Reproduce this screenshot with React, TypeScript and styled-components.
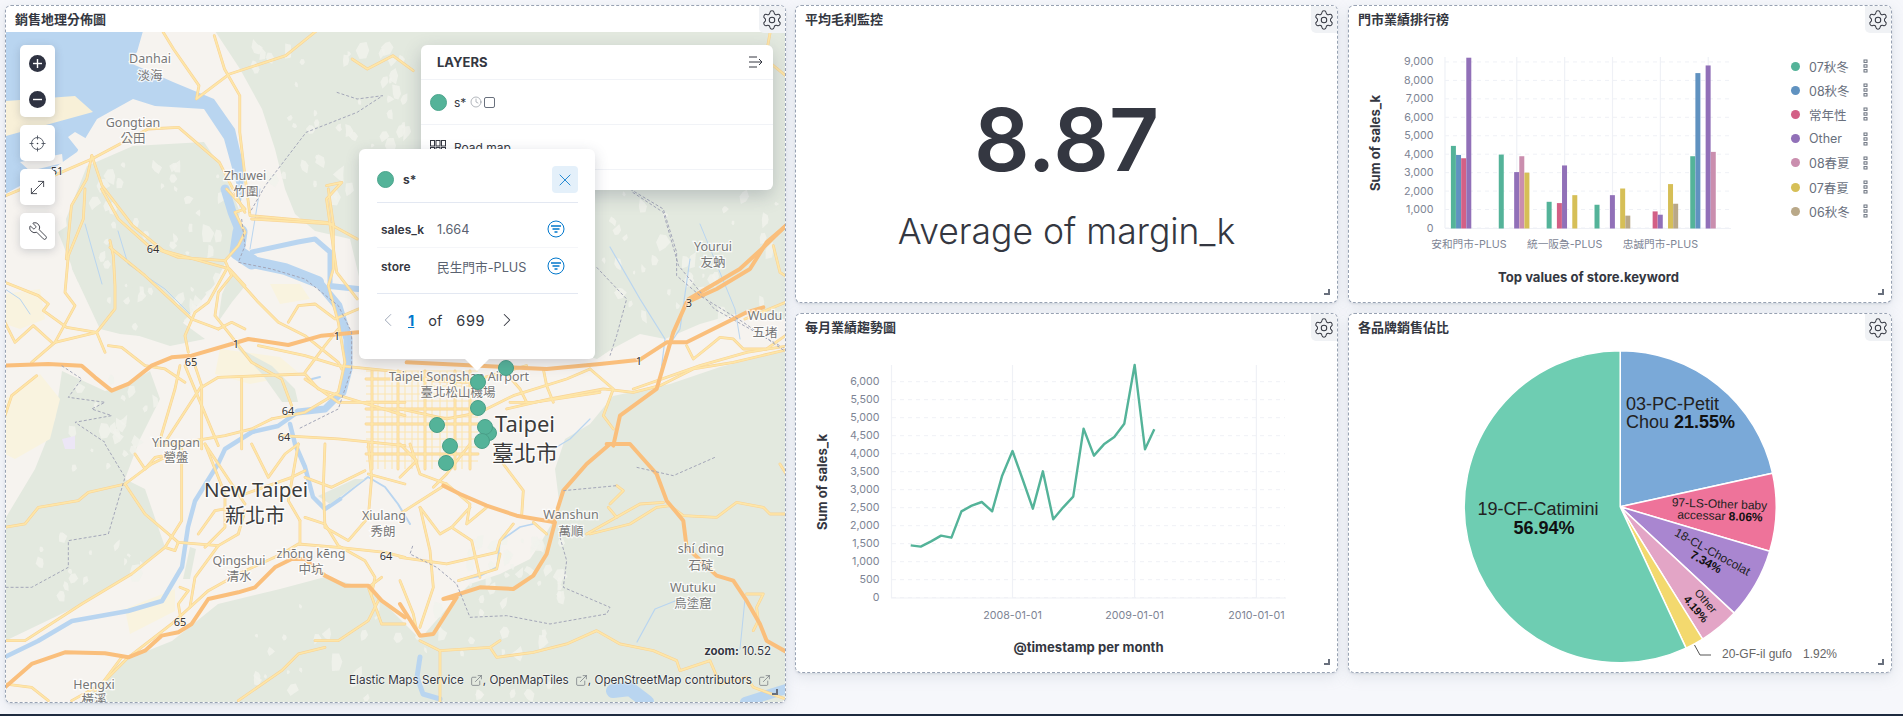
import React from "react";
import styled, { createGlobalStyle } from "styled-components";
import { Settings, Clock, ExternalLink, MoveDiagonal, Wrench, X, ChevronLeft, ChevronRight } from "lucide-react";

const Global = createGlobalStyle`
  html, body { margin: 0; padding: 0; background: #f6f7fb; overflow: hidden; }
  body { font-family: Inter, "Noto Sans CJK TC", sans-serif; color: #343741; }
`;

const Page = styled.div`
  display: flex;
  align-items: flex-start;
  gap: 9px;
  height: 714px;
  box-sizing: border-box;
  padding: 5px 0 0 5px;
`;
const BottomBar = styled.div`
  height: 2px;
  background: #1d2a3e;
`;
const Panel = styled.section<{ $w: number; $h: number }>`
  position: relative;
  box-sizing: border-box;
  width: ${(p) => p.$w}px;
  height: ${(p) => p.$h}px;
  background: #fff;
  border: 1px dashed #98a2b3;
  border-radius: 6px;
  box-shadow: 0 1px 2px rgba(152, 162, 179, 0.3), 0 4px 14px rgba(152, 162, 179, 0.22);
  display: flex;
  flex-direction: column;
  overflow: hidden;
`;
const PanelHeader = styled.header`
  height: 26px;
  flex: none;
  display: flex;
  align-items: center;
  padding: 0 9px;
  font-size: 13px;
  line-height: 26px;
  font-weight: 600;
  color: #343741;
`;
const GearButton = styled.div`
  position: absolute;
  top: 0;
  right: 0;
  width: 26px;
  height: 27px;
  z-index: 5;
  display: flex;
  align-items: center;
  justify-content: center;
  background: #f0f2f5;
  border-bottom-left-radius: 5px;
  color: #343741;
`;
const ResizeMark = styled.div`
  position: absolute;
  right: 7px;
  bottom: 7px;
  width: 6px;
  height: 6px;
  border-right: 2px solid #69707d;
  border-bottom: 2px solid #69707d;
  box-sizing: border-box;
  z-index: 6;
`;
const RightGrid = styled.div`
  display: grid;
  grid-template-columns: 543px 544px;
  grid-template-rows: 298px 360px;
  gap: 10px;
`;

/* ---- Map ---- */
const MapBody = styled.div`
  position: relative;
  flex: 1;
  overflow: hidden;
`;
const MapSvg = styled.svg`
  display: block;
  background: #f6f3ef;
`;
const Green = styled.polygon`
  fill: #e3e9df;
`;
const Sand = styled.polygon<{ $c?: string }>`
  fill: ${(p) => p.$c || "#f9f3df"};
`;
const Patch = styled.polygon`
  fill: #f1f2ec;
  opacity: 0.85;
`;
const Sea = styled.polygon`
  fill: #b9d5f0;
`;
const Stream = styled.polyline`
  fill: none;
  stroke: #b9d5f0;
  stroke-linejoin: round;
  stroke-linecap: round;
`;
const CityLine = styled.polyline`
  fill: none;
  stroke: #fbe6b2;
  stroke-width: 1.1;
`;
const RoadCase = styled.polyline`
  fill: none;
  stroke: #f8d395;
  stroke-width: 2.8;
  stroke-linejoin: round;
  stroke-linecap: round;
`;
const RoadFill = styled.polyline`
  fill: none;
  stroke: #fee6a8;
  stroke-width: 1.7;
  stroke-linejoin: round;
  stroke-linecap: round;
`;
const Motorway = styled.polyline`
  fill: none;
  stroke: #fabf7c;
  stroke-width: 4;
  stroke-linejoin: round;
  stroke-linecap: round;
`;
const Boundary = styled.polyline`
  fill: none;
  stroke: #a3a6b8;
  stroke-width: 1;
  stroke-dasharray: 3 2;
`;
const MapLabel = styled.text<{ $size: number; $dark?: boolean }>`
  font-family: "Noto Sans", "Noto Sans CJK TC", sans-serif;
  font-size: ${(p) => p.$size}px;
  fill: ${(p) => (p.$dark ? "#3c3c3c" : "#777")};
  stroke: rgba(255, 255, 255, 0.8);
  stroke-width: 2.4px;
  paint-order: stroke;
  text-anchor: middle;
  dominant-baseline: central;
`;
const Shield = styled.text`
  font-family: "Noto Sans", sans-serif;
  font-size: 11px;
  fill: #333;
  stroke: rgba(255, 255, 255, 0.6);
  stroke-width: 1.5px;
  paint-order: stroke;
  text-anchor: middle;
  dominant-baseline: central;
`;
const Marker = styled.circle`
  fill: #54b399;
  stroke: #4a9f88;
  stroke-width: 1;
`;

const Toolbar = styled.div`
  position: absolute;
  left: 14px;
  top: 13px;
  display: flex;
  flex-direction: column;
  gap: 8px;
`;
const ToolGroup = styled.div`
  width: 35px;
  background: #fff;
  border-radius: 5px;
  box-shadow: 0 2px 8px rgba(60, 70, 90, 0.22);
  display: flex;
  flex-direction: column;
`;
const ToolButton = styled.div`
  height: 36px;
  display: flex;
  align-items: center;
  justify-content: center;
  color: #343741;
`;
const MirroredWrench = styled(Wrench)`
  transform: scaleX(-1);
`;

const LayersCard = styled.div`
  position: absolute;
  left: 415px;
  top: 13px;
  width: 352px;
  height: 145px;
  background: #fff;
  border-radius: 6px;
  box-shadow: 0 6px 18px rgba(60, 70, 90, 0.25);
  display: flex;
  flex-direction: column;
`;
const LayersHead = styled.div`
  height: 35px;
  flex: none;
  box-sizing: border-box;
  display: flex;
  align-items: center;
  justify-content: space-between;
  padding: 0 9px 0 16px;
  border-bottom: 1px solid #f1f3f7;
  font-size: 13px;
  font-weight: 700;
`;
const LayerRow = styled.div`
  height: 45px;
  flex: none;
  box-sizing: border-box;
  display: flex;
  align-items: center;
  padding: 0 0 0 8px;
  border-bottom: 1px solid #f1f3f7;
  font-size: 12px;
  color: #343741;
`;
const LayerSlot = styled.span`
  width: 18px;
  margin-right: 7px;
  display: flex;
  justify-content: center;
`;
const SmallSquare = styled.span`
  display: inline-block;
  width: 9px;
  height: 9px;
  border: 1px solid #69707d;
  border-radius: 2px;
  margin-left: 2px;
`;
const Dot = styled.span`
  display: inline-block;
  width: 17px;
  height: 17px;
  border-radius: 50%;
  background: #54b399;
  box-sizing: border-box;
  border: 1px solid #4da68e;
  flex: none;
`;

const Popover = styled.div`
  position: absolute;
  left: 353px;
  top: 117px;
  width: 236px;
  height: 210px;
  box-sizing: border-box;
  background: #fff;
  border-radius: 6px;
  box-shadow: 0 4px 14px rgba(60, 70, 90, 0.22);
  padding: 17px 17px 0 18px;
  display: flex;
  flex-direction: column;
  &::after {
    content: "";
    position: absolute;
    left: 106px;
    bottom: -12px;
    border-left: 12px solid transparent;
    border-right: 12px solid transparent;
    border-top: 12px solid #fff;
  }
`;
const PopHead = styled.div`
  display: flex;
  align-items: center;
  height: 27px;
  margin-bottom: 9px;
  font-size: 12px;
  font-weight: 700;
  gap: 9px;
`;
const CloseButton = styled.div`
  margin-left: auto;
  width: 26px;
  height: 27px;
  border-radius: 4px;
  background: #e4f0fa;
  color: #0077cc;
  display: flex;
  align-items: center;
  justify-content: center;
`;
const PopRows = styled.div`
  border-top: 1px solid #e3e8f2;
  border-bottom: 1px solid #e3e8f2;
  padding: 8px 0 9px;
`;
const PopRow = styled.div<{ $last?: boolean }>`
  height: 36px;
  display: grid;
  grid-template-columns: 56px 1fr 18px 13px;
  align-items: center;
  padding-left: 4px;
  font-size: 12px;
  border-bottom: ${(p) => (p.$last ? "0" : "1px solid #f5f6f9")};
`;
const PopKey = styled.span`
  font-weight: 600;
  color: #343741;
`;
const PopVal = styled.span`
  color: #5a6270;
  font-size: 12.7px;
  white-space: nowrap;
`;
const Pager = styled.div`
  height: 52px;
  display: flex;
  align-items: center;
  font-size: 14.5px;
  color: #343741;
`;
const PagerNow = styled.span`
  color: #0077cc;
  font-weight: 700;
  text-decoration: underline;
  margin: 0 14px 0 9px;
`;
const PagerTotal = styled.span`
  margin: 0 11px 0 14px;
  letter-spacing: 0.6px;
`;
const MapStatus = styled.div`
  position: absolute;
  right: 14px;
  bottom: 44px;
  font-size: 11.5px;
  color: #343741;
  text-shadow: 0 0 2px #fff, 0 0 2px #fff;
  & b { font-weight: 700; }
`;
const Attribution = styled.div`
  position: absolute;
  right: 14px;
  bottom: 15px;
  font-size: 11.7px;
  color: #343741;
  white-space: nowrap;
  display: flex;
  align-items: center;
  text-shadow: 0 0 2px #fff, 0 0 2px #fff;
  & svg { margin: 0 0 0 6px; color: #4a505c; }
`;

/* ---- Metric ---- */
const MetricBody = styled.div`
  flex: 1;
  display: flex;
  flex-direction: column;
  align-items: center;
  padding-top: 63px;
`;
const MetricValue = styled.div`
  font-size: 87px;
  line-height: 89px;
  font-weight: 600;
  color: #343741;
`;
const MetricLabel = styled.div`
  margin-top: 27px;
  font-size: 35.5px;
  line-height: 42px;
  font-weight: 300;
  color: #343741;
`;

/* ---- Charts ---- */
const ChartRow = styled.div`
  flex: 1;
  display: flex;
`;
const ChartSvg = styled.svg`
  display: block;
  flex: none;
`;
const GridLine = styled.line<{ $dash?: boolean }>`
  stroke: #eff1f6;
  stroke-width: ${(p) => (p.$dash ? 1 : 1.2)};
  stroke-dasharray: ${(p) => (p.$dash ? "4 4" : "none")};
`;
const Tick = styled.text<{ $anchor?: string }>`
  font-family: Inter, "Noto Sans CJK TC", sans-serif;
  font-size: 10.7px;
  fill: #7d8494;
  text-anchor: ${(p) => p.$anchor || "end"};
  dominant-baseline: central;
`;
const AxisTitle = styled.text`
  font-family: Inter, sans-serif;
  font-size: 13.1px;
  font-weight: 700;
  fill: #343741;
  text-anchor: middle;
  dominant-baseline: central;
`;
const Legend = styled.ul`
  list-style: none;
  margin: 0;
  padding: 22px 0 0 22px;
  display: flex;
  flex-direction: column;
`;
const LegendItem = styled.li`
  height: 24.2px;
  display: flex;
  align-items: center;
  font-size: 12.5px;
  color: #69707d;
  white-space: nowrap;
`;
const LegendDot = styled.span<{ $c: string }>`
  width: 9px;
  height: 9px;
  border-radius: 50%;
  background: ${(p) => p.$c};
  margin-right: 9px;
  flex: none;
`;
const LegendText = styled.span`
  width: 54px;
`;
const PieText = styled.text<{ $size: number; $anchor?: string; $gray?: boolean }>`
  font-family: "Liberation Sans", Arial, sans-serif;
  font-size: ${(p) => p.$size}px;
  fill: ${(p) => (p.$gray ? "#666" : "#222")};
  text-anchor: ${(p) => p.$anchor || "middle"};
  dominant-baseline: central;
  & tspan { font-weight: 700; fill: #111; }
`;

/* ---- Small drawn icons ---- */
const Circled = ({ minus }: { minus?: boolean }) => (
  <svg width="17" height="17" viewBox="0 0 17 17">
    <circle cx="8.5" cy="8.5" r="8.5" fill="#2f3342" />
    <rect x="4" y="7.8" width="9" height="1.4" fill="#fff" />
    {!minus && <rect x="7.8" y="4" width="1.4" height="9" fill="#fff" />}
  </svg>
);
const Locate = () => (
  <svg width="17" height="17" viewBox="0 0 17 17" fill="none" stroke="#4a505c" strokeWidth=".9">
    <circle cx="8.5" cy="8.5" r="6" />
    <path d="M8.5 0.5v4M8.5 12.5v4M.5 8.5h4M12.5 8.5h4" />
    <circle cx="8.5" cy="8.5" r=".8" fill="#343741" stroke="none" />
  </svg>
);
const FilterCircle = () => (
  <svg width="18" height="18" viewBox="0 0 18 18" fill="none" stroke="#0077cc">
    <circle cx="9" cy="9" r="8" strokeWidth="1" />
    <path d="M4 6h10M5.5 9h7M7.5 12h3" strokeWidth="1.3" />
  </svg>
);
const CollapseLayers = () => (
  <svg width="16" height="16" viewBox="0 0 16 16" fill="none" stroke="#343741" strokeWidth="1">
    <path d="M1 3h8M1 8h13M1 13h8M11 5l3 3-3 3" />
  </svg>
);
const RoadGrid = () => (
  <svg width="16" height="14" viewBox="0 0 16 14" fill="none" stroke="#343741" strokeWidth="1">
    {[0.5, 6, 11.5].map((x) =>
      [0.5, 7.5].map((y) => <rect key={`${x}-${y}`} x={x} y={y} width="4" height="5.5" />)
    )}
  </svg>
);
const Kebab = () => (
  <svg width="5" height="14" viewBox="0 0 5 14" fill="none" stroke="#69707d" strokeWidth="1">
    <rect x="1" y="1" width="3" height="2.4" />
    <rect x="1" y="5.8" width="3" height="2.4" />
    <rect x="1" y="10.6" width="3" height="2.4" />
  </svg>
);

/* ---- Map data (page coordinates, or traced tile coordinates) ---- */
const greens = [
  "87,167 133,147 204,143 224,173 240,213 232,250 215,285 190,315 170,340 120,335 100,330 72,270 66,220",
  "215,32 240,70 262,110 275,150 285,190 295,215 315,232 350,240 362,290 400,300 597,360 612,350 640,335 665,340 700,325 735,315 786,320 786,32",
  "786,352 720,368 670,385 613,397 590,425 565,440 555,470 560,510 540,545 530,560 500,575 470,585 455,600 420,640 370,590 325,578 280,590 218,605 172,642 122,662 82,703 786,703",
  "62,372 105,392 122,388 150,372 160,400 140,440 125,480 145,490 165,548 132,575 82,605 5,642 5,520 35,470 55,420",
  "58,233 85,215 105,283 78,283",
  "118,280 150,300 205,340 170,347 118,330",
];
const sandy: [string, string?][] = [
  ["5,295 40,290 45,320 20,330 5,325"],
  ["5,400 40,375 60,400 50,440 15,460 5,455"],
  ["125,610 175,590 175,612 130,635"],
  ["220,350 280,358 300,375 250,385 215,375"],
  ["270,285 300,285 310,300 280,305"],
  ["62,440 75,437 75,450 65,450", "#ece6f6"],
];
const seaPoly =
  "5,32 143,32 137,53 128,63 173,83 214,100 235,130 245,173 240,210 237,187 224,140 204,110 155,107 133,100 97,120 77,153 57,167 5,195";
const harbour = [
  "6,102 75,97 93,113 6,137",
  "20,163 62,155 63,164 30,172",
  "80,153 68,138 75,133 87,140 100,123 110,128 95,150",
];
const rivers: [string, number][] = [
  ["225,190 232,213 240,233", 9],
  ["240,233 237,253 252,263", 15],
  ["252,263 285,270 318,283", 12],
  ["318,283 338,307 348,340 348,370 342,393", 9],
  ["342,393 325,410 298,413", 7],
  ["298,413 278,427 252,433 225,450 218,465 195,502 188,528 182,568 162,602 128,612 72,622 38,642 5,658", 4.5],
  ["252,253 298,243 315,240 330,253 330,283", 5],
  ["330,287 358,290", 6],
  ["290,425 295,445 305,468 313,498 325,510 340,500", 4.5],
  ["340,500 355,488 368,478 385,488 398,505 410,525", 2],
  ["458,582 480,577 497,568 500,542 520,528 533,525", 1.6],
  ["420,658 417,678 423,695 440,700", 5],
  ["613,692 630,690 647,703", 14],
  ["745,703 770,695 786,690", 10],
  ["545,455 570,440 590,420", 1.2],
  ["85,225 92,250 102,285", 1],
  ["118,232 128,265 165,290 190,315", 1],
  ["610,248 640,300 665,340 660,380", 1.2],
  ["690,260 680,330 670,345", 1.2],
  ["700,225 735,310 740,340", 1],
  ["637,643 655,610 680,600", 1.2],
  ["745,600 740,650", 1],
  ["5,290 20,300 30,315", 1],
  ["260,190 250,250", 1],
  ["312,380 320,378", 2],
];
const greenRiver = [
  "232,273 245,287 232,303 218,323 222,295",
  "235,347 272,367 295,390 298,403 282,403 262,375",
  "190,548 196,550 190,580 183,580",
  "318,497 355,480 365,480 330,505",
];

/* light clearings scattered over the hills, from a fixed seed */
const patchAreas = [
  [95, 165, 225, 330, 46],
  [250, 40, 410, 205, 52],
  [600, 195, 780, 320, 34],
  [250, 600, 560, 700, 40],
  [470, 540, 565, 615, 34],
  [60, 380, 160, 470, 20],
  [30, 530, 150, 600, 14],
];
const makePatches = () => {
  let seed = 17;
  const rnd = () => {
    seed = (seed * 16807) % 2147483647;
    return seed / 2147483647;
  };
  const out: string[] = [];
  patchAreas.forEach(([x0, y0, x1, y1, n]) => {
    for (let i = 0; i < n; i++) {
      const cx = x0 + rnd() * (x1 - x0);
      const cy = y0 + rnd() * (y1 - y0);
      const pts: string[] = [];
      const count = 6;
      const base = 1.5 + rnd() * 4;
      for (let k = 0; k < count; k++) {
        const a = (k / count) * Math.PI * 2;
        const r = base * (0.5 + rnd());
        pts.push(`${(cx + r * Math.cos(a)).toFixed(1)},${(cy + r * 1.4 * Math.sin(a)).toFixed(1)}`);
      }
      out.push(pts.join(" "));
    }
  });
  return out;
};
const PATCHES = makePatches();

type Tile = { tf: string; minor: string[]; motor?: string[]; bound?: string[] };
const TILES: Tile[] = [
  {
    tf: "scale(.5102 .3333)",
    minor: [
      "320,100 340,150 390,260 385,300 450,225 560,170 620,96",
      "420,110 440,210 470,290 470,400 480,530 490,650 640,670 700,720",
      "690,180 720,210 770,170 810,215",
      "11,590 105,530 180,480 290,390 350,385 430,490 480,640",
      "180,470 200,560 260,680 320,755 450,810 480,860",
      "180,470 170,540 140,620 130,780",
      "640,560 670,550 640,600 660,820 700,900",
      "1510,96 1500,180 1540,230",
      "1460,960 1540,910",
    ],
    motor: ["1540,680 1500,740 1450,810 1350,900"],
    bound: ["660,280 700,300 750,290 700,340 600,400 520,560 490,640", "1240,580 1300,640 1330,800 1400,930 1540,1050"],
  },
  {
    tf: "translate(5 190) scale(.3333)",
    minor: [
      "290,0 340,90 430,170 520,205 660,215 680,260 640,310 630,380 670,430 740,520 830,570 860,650",
      "740,90 985,105 985,240 970,290 1000,400 1020,520 1000,610 900,670 800,690",
      "315,155 325,200 330,290 330,360 275,430 300,490",
      "315,175 420,260 560,390 600,405 640,420",
      "240,0 235,90 190,200 180,310 210,350 150,460 80,520",
      "0,280 100,320 130,345 115,365 185,415 275,430 150,460",
      "0,400 30,460 85,410 140,460",
      "310,470 350,475 420,530 480,540 540,580",
      "550,490 540,440 570,370 610,340 665,240",
      "560,500 590,590 590,780",
      "590,595 640,565 900,555 940,600 1200,680",
      "710,570 710,780",
      "590,590 480,760",
      "525,530 510,600 460,770",
      "540,530 640,770",
      "680,250 760,340 820,400 900,440 1000,520 1010,540",
      "850,400 880,350 930,345 990,390 1060,360",
      "760,470 900,500 1000,530 1200,550",
      "900,550 960,470 1000,420",
      "800,690 740,720 660,740 480,770",
      "830,740 1000,750 1200,770",
      "0,680 20,620 95,560",
      "660,215 700,170 720,130 690,70 720,60 665,0",
      "970,0 985,105",
      "640,420 680,400 720,420",
      "900,570 1000,640 1200,640",
    ],
    motor: ["0,530 130,525 230,530 270,565 320,605 370,585 440,530 500,505 560,500 690,462 730,450 850,468 950,440 1060,430"],
    bound: [
      "170,530 230,570 190,625 300,640 260,660 320,680 210,700 300,760",
      "710,90 720,170 700,220 800,240 900,270 1000,350 1040,430 1040,540 1000,660 880,720",
    ],
  },
  {
    tf: "translate(400 190) scale(.3333)",
    minor: [
      "430,540 440,590 460,640",
      "0,660 140,690 240,670 340,620 500,570 570,540",
      "600,610 400,640 330,640",
      "320,660 450,630 610,600 700,610 780,590 880,540 1000,520 1170,480",
      "570,540 640,600 610,680 640,720",
      "700,600 900,530 1040,490 1170,470",
      "860,470 880,510 930,470 960,445 1000,450 1030,480 1100,480 1170,430",
      "1120,170 1140,250 1170,270",
      "0,570 200,580 380,530",
      "300,530 360,600 380,640",
    ],
    motor: [
      "20,520 440,540 600,525 720,512 800,460 860,460 1000,390 1040,370 1090,355",
      "640,770 660,680 770,600 820,430 860,340 950,300 1050,240 1100,160 1170,100",
    ],
    bound: [
      "690,0 790,60 830,190 830,260 900,320 1030,400 1160,490",
      "590,235 680,330 650,440 630,500",
    ],
  },
  {
    tf: "translate(5 445) scale(.3333)",
    minor: [
      "0,250 60,240 100,190 220,170 250,145 360,120 440,60 500,30",
      "360,120 420,210 520,295 640,305 700,270 720,200",
      "480,310 510,320 520,295",
      "640,305 570,400 555,490 500,540 370,640 270,740",
      "600,310 660,250 660,150 600,0",
      "580,270 630,200 660,195",
      "525,430 550,440 520,480 530,540",
      "555,490 610,440 700,390 830,330 880,300 1000,310 1140,325 1200,340",
      "885,230 885,300",
      "880,0 850,170 885,230",
      "900,220 960,240 1000,305 1080,350 1110,400 1100,450",
      "960,0 955,130 960,250 1030,290 1090,220 1100,100 1090,0",
      "720,180 600,0",
      "720,150 860,100 900,80",
      "1080,80 980,130 900,100",
      "0,590 60,590 230,480 380,390 480,310 530,230 530,0",
      "0,720 80,730 130,770",
      "200,770 290,720 350,640",
      "930,590 1000,590 1090,530 1120,470",
      "700,770 830,680 880,630 960,610",
      "1200,540 1130,540 1090,430 1130,400",
      "390,30 420,75 450,40 500,30",
      "740,0 790,100 840,30 880,0",
      "1200,120 1090,90",
    ],
    motor: ["0,730 80,660 180,625 300,628 370,640 420,620 470,575 520,565 560,540 610,465 700,445 750,430 810,370 860,345 900,345 960,395 1020,425 1090,425 1130,470 1200,520"],
    bound: ["300,0 360,100 310,270 190,290 190,370 80,430 0,430"],
  },
  {
    tf: "translate(400 445) scale(.3333)",
    minor: [
      "30,0 60,90 140,120 210,180 200,240 260,190",
      "310,60 370,140 365,215",
      "0,340 140,360 290,325 300,290 340,240",
      "210,190 155,250 120,270 60,190",
      "155,250 215,290 240,400",
      "175,410 290,375 300,330",
      "140,120 30,190 0,210",
      "60,190 90,320 100,430 60,550",
      "0,410 40,510 50,560",
      "570,270 690,240 770,190 810,185 850,215 950,220 1010,175 1090,190 1110,210 1170,210",
      "560,270 640,225 720,180 790,175",
      "630,180 670,140 650,125",
      "625,190 650,220",
      "60,590 120,620 270,610 300,590 270,610 290,640 400,625 500,600 590,560 660,600 760,620 830,650 840,680 930,650 960,720 1040,700 1060,730 1170,770",
      "120,620 120,780",
      "1040,450 1090,450 1070,490 1075,530 1060,560",
      "440,270 400,235",
      "0,0 50,50 0,100",
      "210,0 140,90 100,130",
      "1140,60 1165,100",
    ],
    motor: [
      "0,480 60,575 100,570 170,460 130,465 240,430 340,435 400,395 440,330 465,235 350,215 260,185 180,150 130,125",
      "460,235 490,140 560,60 630,0",
      "620,0 690,0 770,90 800,170 850,230 860,310 950,395 1000,410 1040,470 1080,540 1100,590 1170,630",
    ],
    bound: [
      "480,280 500,350 490,430 630,490 620,510 450,540 320,515 210,520 170,420 110,370 30,330 40,300",
      "490,140 650,125",
      "710,70 820,95 945,40",
    ],
  },
];
const gridV = [372, 398, 425, 455, 470];
const gridH = [380, 410, 425, 455];
const cityV = [378, 385, 392, 405, 412, 418, 432, 440, 447, 462];
const cityH = [372, 387, 395, 402, 418, 433, 440, 448, 462];
const labels: [number, number, string, number, boolean?][] = [
  [150, 59, "Danhai", 12.5], [150, 76, "淡海", 12.5],
  [133, 123, "Gongtian", 12.5], [133, 139, "公田", 12.5],
  [245, 176, "Zhuwei", 12.5], [246, 192, "竹圍", 12.5],
  [713, 247, "Yourui", 12.5], [713, 263, "友蚋", 12.5],
  [765, 316, "Wudu", 12.5], [765, 333, "五堵", 12.5],
  [459, 377, "Taipei Songshan Airport", 12.5], [458, 393, "臺北松山機場", 12.5],
  [525, 424, "Taipei", 22, true], [525, 453, "臺北市", 22, true],
  [256, 490, "New Taipei", 20.5, true], [255, 516, "新北市", 20, true],
  [176, 443, "Yingpan", 12.5], [176, 458, "營盤", 12.5],
  [384, 516, "Xiulang", 12.5], [383, 532, "秀朗", 12.5],
  [571, 515, "Wanshun", 12.5], [571, 532, "萬順", 12.5],
  [701, 549, "shí dìng", 12.5], [701, 566, "石碇", 12.5],
  [693, 588, "Wutuku", 12.5], [693, 604, "烏塗窟", 12.5],
  [239, 561, "Qingshui", 12.5], [239, 577, "清水", 12.5],
  [311, 554, "zhōng kēng", 12.5], [311, 570, "中坑", 12.5],
  [94, 685, "Hengxi", 12.5], [94, 700, "橫溪", 12.5],
];
const shields: [number, number, string][] = [
  [57, 171, "51"], [153, 249, "64"], [191, 362, "65"], [236, 344, "1"], [337, 336, "1"],
  [639, 361, "1"], [689, 303, "3"], [288, 411, "64"], [284, 437, "64"], [386, 556, "64"], [180, 622, "65"],
];
const markers = [
  [506, 369], [478, 383], [478, 409], [437, 426], [489, 434], [485, 428], [482, 442], [450, 447], [446, 464],
];

const MapDrawing = () => (
  <MapSvg width="779" height="670" viewBox="6 33 779 670">
    {greens.map((p, i) => <Green key={i} points={p} />)}
    {PATCHES.map((p, i) => <Patch key={i} points={p} />)}
    {sandy.map(([p, c], i) => <Sand key={i} points={p} $c={c} />)}
    <Sea points={seaPoly} />
    {harbour.map((p, i) => <Sand key={i} points={p} $c={i === 0 ? "#f8f0d8" : "#f6f3ef"} />)}
    {rivers.map(([p, w], i) => <Stream key={i} points={p} strokeWidth={w} />)}
    {greenRiver.map((p, i) => <Green key={i} points={p} />)}
    {cityV.map((x) => <CityLine key={x} points={`${x},372 ${x},470`} />)}
    {cityH.map((y) => <CityLine key={y} points={`366,${y} 478,${y}`} />)}
    {gridV.map((x) => <RoadCase key={x} points={`${x},372 ${x},470`} />)}
    {gridH.map((y) => <RoadCase key={y} points={`366,${y} 478,${y}`} />)}
    {TILES.map((t, i) => (
      <g key={i} transform={t.tf}>
        {t.minor.map((p, j) => <RoadCase key={j} points={p} vectorEffect="non-scaling-stroke" />)}
      </g>
    ))}
    {gridV.map((x) => <RoadFill key={x} points={`${x},372 ${x},470`} />)}
    {gridH.map((y) => <RoadFill key={y} points={`366,${y} 478,${y}`} />)}
    {TILES.map((t, i) => (
      <g key={i} transform={t.tf}>
        {t.minor.map((p, j) => <RoadFill key={j} points={p} vectorEffect="non-scaling-stroke" />)}
        {(t.motor || []).map((p, j) => <Motorway key={j} points={p} vectorEffect="non-scaling-stroke" />)}
        {(t.bound || []).map((p, j) => <Boundary key={j} points={p} vectorEffect="non-scaling-stroke" />)}
      </g>
    ))}
    {labels.map(([x, y, t, s, d], i) => <MapLabel key={i} x={x} y={y} $size={s} $dark={d}>{t}</MapLabel>)}
    {shields.map(([x, y, t], i) => <Shield key={i} x={x} y={y}>{t}</Shield>)}
    {markers.map(([x, y], i) => <Marker key={i} cx={x} cy={y} r="7.5" />)}
  </MapSvg>
);

/* ---- Bar chart ---- */
const COLORS: Record<string, string> = {
  g: "#54b399", b: "#6092c0", p: "#d36086", u: "#9170b8", l: "#ca8eae", y: "#d6bf57", t: "#b9a888",
};
const LEGEND: [string, string][] = [
  ["07秋冬", "g"], ["08秋冬", "b"], ["常年性", "p"], ["Other", "u"], ["08春夏", "l"], ["07春夏", "y"], ["06秋冬", "t"],
];
const SLOT = ["g", "b", "p", "u", "l", "y", "t"];
const BARS: Record<string, number>[] = [
  { g: 4450, b: 3960, p: 3780, u: 9230 },
  { g: 3980, u: 3030, l: 3890, y: 3000 },
  { g: 1420, p: 1350, u: 3390, y: 1780 },
  { g: 1260, u: 1780, y: 2140, t: 670 },
  { p: 900, u: 720, y: 2380, t: 1315 },
  { g: 3890, b: 8396, u: 8810, l: 4126 },
];
const groupX = (i: number) => 1468.9 + 47.87 * i;
const valY = (v: number) => 228 - (v * 18.45) / 1000;

const BarChart = () => (
  <ChartSvg width="420" height="271" viewBox="1349 32 420 271">
    {Array.from({ length: 10 }, (_, i) => (
      <GridLine key={i} $dash x1="1445" x2="1731" y1={valY(i * 1000)} y2={valY(i * 1000)} />
    ))}
    {[0, 1, 2, 3, 4, 5].map((i) => (
      <GridLine key={i} x1={i === 0 ? 1445 : groupX(i)} x2={i === 0 ? 1445 : groupX(i)} y1="57" y2="228" />
    ))}
    <GridLine x1="1445" x2="1731" y1="228.5" y2="228.5" />
    {BARS.map((g, i) =>
      SLOT.map((k, s) =>
        g[k] ? (
          <rect
            key={k}
            x={groupX(i) - 18 + 5.13 * s}
            y={valY(g[k])}
            width="5"
            height={228.5 - valY(g[k])}
            fill={COLORS[k]}
          />
        ) : null
      )
    )}
    {Array.from({ length: 10 }, (_, i) => (
      <Tick key={i} x="1433.5" y={valY(i * 1000)}>{i === 0 ? "0" : `${i},000`}</Tick>
    ))}
    <Tick $anchor="middle" x={groupX(0)} y="244">安和門市-PLUS</Tick>
    <Tick $anchor="middle" x={groupX(2)} y="244">統一阪急-PLUS</Tick>
    <Tick $anchor="middle" x={groupX(4)} y="244">忠誠門市-PLUS</Tick>
    <AxisTitle transform="translate(1375 143) rotate(-90)">Sum of sales_k</AxisTitle>
    <AxisTitle x="1588.5" y="277">Top values of store.keyword</AxisTitle>
  </ChartSvg>
);

/* ---- Line chart ---- */
const LINE = [
  [338, 706], [366, 710], [395, 694], [423, 677], [452, 683], [480, 604], [509, 587], [537, 576], [566, 604],
  [594, 497], [623, 423], [652, 510], [680, 596], [708, 484], [737, 628], [765, 592], [793, 560], [822, 356],
  [851, 437], [879, 403], [908, 381], [936, 341], [965, 165], [994, 418], [1020, 358],
];
const lineY = (v: number) => 597.7 - (v * 18) / 500;
const LineChart = () => (
  <ChartSvg width="541" height="332" viewBox="796 340 541 332">
    {Array.from({ length: 13 }, (_, i) => (
      <GridLine key={i} $dash x1="892" x2="1285" y1={lineY(i * 500)} y2={lineY(i * 500)} />
    ))}
    {[891.5, 1012.5, 1134.6, 1256.4].map((x) => <GridLine key={x} x1={x} x2={x} y1="365" y2="598" />)}
    <GridLine x1="891" x2="1286" y1="598" y2="598" />
    <polyline
      fill="none"
      stroke="#54b399"
      strokeWidth="2.4"
      strokeLinejoin="round"
      points={LINE.map(([x, y]) => `${790 + x / 2.8},${310 + y / 3}`).join(" ")}
    />
    {Array.from({ length: 13 }, (_, i) => (
      <Tick key={i} x="879.5" y={lineY(i * 500)}>{i === 0 ? "0" : (i * 500).toLocaleString("en-US")}</Tick>
    ))}
    <Tick $anchor="middle" x="1012.5" y="615">2008-01-01</Tick>
    <Tick $anchor="middle" x="1134.6" y="615">2009-01-01</Tick>
    <Tick $anchor="middle" x="1256.4" y="615">2010-01-01</Tick>
    <AxisTitle transform="translate(821.5 482) rotate(-90)">Sum of sales_k</AxisTitle>
    <AxisTitle x="1088.5" y="646.5">@timestamp per month</AxisTitle>
  </ChartSvg>
);

/* ---- Pie chart ---- */
const SLICES: [number, string][] = [
  [21.55, "#7aa9d8"], [8.06, "#ee739a"], [7.34, "#a986d0"], [4.19, "#e3a5c6"], [1.92, "#f3d96e"], [56.94, "#6ecdb2"],
];
const PX = 1621.2, PY = 506.7, PR = 156;
const polar = (pct: number): [number, number] => {
  const a = (pct / 100) * 2 * Math.PI;
  return [PX + PR * Math.sin(a), PY - PR * Math.cos(a)];
};
const PieChart = () => {
  let acc = 0;
  return (
    <ChartSvg width="542" height="332" viewBox="1350 340 542 332">
      {SLICES.map(([v, c]) => {
        const [x1, y1] = polar(acc);
        acc += v;
        const [x2, y2] = polar(acc);
        return (
          <path
            key={c}
            d={`M${PX} ${PY}L${x1} ${y1}A${PR} ${PR} 0 ${v > 50 ? 1 : 0} 1 ${x2} ${y2}Z`}
            fill={c}
            stroke="#fff"
            strokeWidth="1.5"
          />
        );
      })}
      <PieText $size={18} $anchor="start" x="1627" y="404">03-PC-Petit</PieText>
      <PieText $size={18} $anchor="start" x="1627" y="422">Chou <tspan>21.55%</tspan></PieText>
      <PieText $size={18} x="1539" y="509">19-CF-Catimini</PieText>
      <PieText $size={18} x="1545" y="528"><tspan>56.94%</tspan></PieText>
      <PieText $size={12} x="1720.5" y="504" transform="rotate(2 1720.5 504)">97-LS-Other baby</PieText>
      <PieText $size={12} x="1721" y="516" transform="rotate(2 1721 516)">accessar <tspan>8.06%</tspan></PieText>
      <PieText $size={12} x="1713.5" y="552" transform="rotate(29 1713.5 552)">18-CL-Chocolat</PieText>
      <PieText $size={12} x="1707" y="562" transform="rotate(29 1707 562)"><tspan>7.34%</tspan></PieText>
      <PieText $size={11} x="1707" y="601" transform="rotate(50 1707 601)">Other</PieText>
      <PieText $size={11} x="1697" y="609" transform="rotate(50 1697 609)"><tspan>4.19%</tspan></PieText>
      <polyline points="1695.5,645 1701,655 1712,655" fill="none" stroke="#555" strokeWidth="1" />
      <PieText $gray $size={12} $anchor="start" x="1723" y="654">20-GF-il gufo</PieText>
      <PieText $gray $size={12} $anchor="start" x="1804" y="654">1.92%</PieText>
    </ChartSvg>
  );
};

const Gear = () => (
  <GearButton>
    <Settings size={22} strokeWidth={1.1} />
  </GearButton>
);

export default function App() {
  return (
    <>
      <Global />
      <Page>
        <Panel $w={781} $h={698}>
          <PanelHeader>銷售地理分佈圖</PanelHeader>
          <MapBody>
            <MapDrawing />
            <Toolbar>
              <ToolGroup>
                <ToolButton><Circled /></ToolButton>
                <ToolButton><Circled minus /></ToolButton>
              </ToolGroup>
              <ToolGroup><ToolButton><Locate /></ToolButton></ToolGroup>
              <ToolGroup><ToolButton><MoveDiagonal size={21} strokeWidth={1} /></ToolButton></ToolGroup>
              <ToolGroup><ToolButton><MirroredWrench size={20} strokeWidth={1.1} /></ToolButton></ToolGroup>
            </Toolbar>
            <LayersCard>
              <LayersHead>LAYERS<CollapseLayers /></LayersHead>
              <LayerRow>
                <LayerSlot><Dot /></LayerSlot>
                s*&nbsp;<Clock size={12} strokeWidth={1} color="#69707d" /><SmallSquare />
              </LayerRow>
              <LayerRow>
                <LayerSlot><RoadGrid /></LayerSlot>
                Road map
              </LayerRow>
            </LayersCard>
            <Popover>
              <PopHead>
                <Dot />s*
                <CloseButton><X size={20} strokeWidth={1} /></CloseButton>
              </PopHead>
              <PopRows>
                <PopRow>
                  <PopKey>sales_k</PopKey>
                  <PopVal>1.664</PopVal>
                  <FilterCircle />
                </PopRow>
                <PopRow $last>
                  <PopKey>store</PopKey>
                  <PopVal>民生門市-PLUS</PopVal>
                  <FilterCircle />
                </PopRow>
              </PopRows>
              <Pager>
                <ChevronLeft size={22} strokeWidth={1} color="#98a2b3" />
                <PagerNow>1</PagerNow>
                of
                <PagerTotal>699</PagerTotal>
                <ChevronRight size={22} strokeWidth={1.1} />
              </Pager>
            </Popover>
            <MapStatus><b>zoom:</b> 10.52</MapStatus>
            <Attribution>
              Elastic Maps Service<ExternalLink size={13} strokeWidth={1} />, OpenMapTiles<ExternalLink size={13} strokeWidth={1} />, OpenStreetMap contributors<ExternalLink size={13} strokeWidth={1} />
            </Attribution>
          </MapBody>
          <Gear />
          <ResizeMark />
        </Panel>
        <RightGrid>
          <Panel $w={543} $h={298}>
            <PanelHeader>平均毛利監控</PanelHeader>
            <MetricBody>
              <MetricValue>8.87</MetricValue>
              <MetricLabel>Average of margin_k</MetricLabel>
            </MetricBody>
            <Gear />
            <ResizeMark />
          </Panel>
          <Panel $w={544} $h={298}>
            <PanelHeader>門市業績排行榜</PanelHeader>
            <ChartRow>
              <BarChart />
              <Legend>
                {LEGEND.map(([t, k]) => (
                  <LegendItem key={t}>
                    <LegendDot $c={COLORS[k]} />
                    <LegendText>{t}</LegendText>
                    <Kebab />
                  </LegendItem>
                ))}
              </Legend>
            </ChartRow>
            <Gear />
            <ResizeMark />
          </Panel>
          <Panel $w={543} $h={360}>
            <PanelHeader>每月業績趨勢圖</PanelHeader>
            <LineChart />
            <Gear />
            <ResizeMark />
          </Panel>
          <Panel $w={544} $h={360}>
            <PanelHeader>各品牌銷售佔比</PanelHeader>
            <PieChart />
            <Gear />
            <ResizeMark />
          </Panel>
        </RightGrid>
      </Page>
      <BottomBar />
    </>
  );
}
